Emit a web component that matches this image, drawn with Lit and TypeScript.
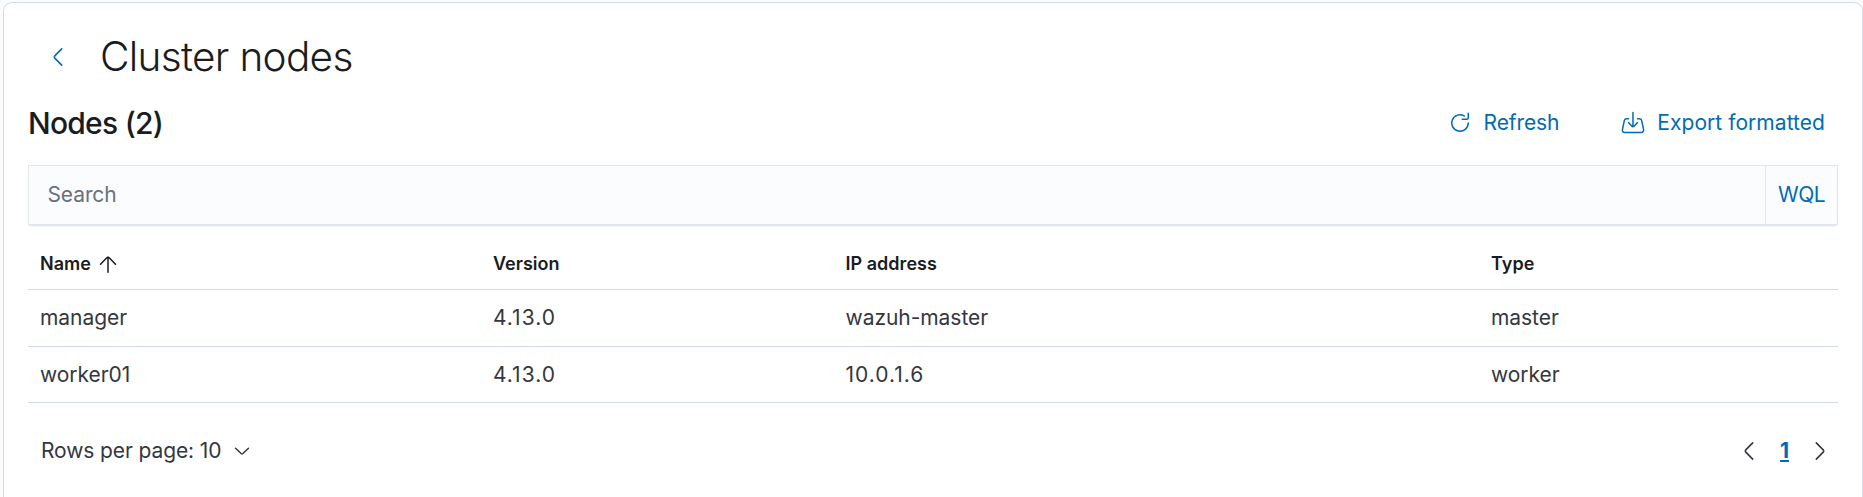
import { LitElement, html, css, svg } from "lit";
import { customElement, property } from "lit/decorators.js";
import { classMap } from "lit/directives/class-map.js";

const icons: Record<string, unknown> = {
  left: svg`<path d="M10.843 13.069L6.232 8.384a.546.546 0 010-.768l4.61-4.685a.552.552 0 000-.771.53.53 0 00-.759 0l-4.61 4.684a1.65 1.65 0 000 2.312l4.61 4.684a.53.53 0 00.76 0 .552.552 0 000-.771z"/>`,
  right: svg`<path d="M5.157 13.069l4.611-4.685a.546.546 0 000-.768L5.158 2.93a.552.552 0 010-.771.53.53 0 01.759 0l4.61 4.684a1.65 1.65 0 010 2.312l-4.61 4.684a.53.53 0 01-.76 0 .552.552 0 010-.771z"/>`,
  refresh: svg`<path d="M11.228 2.942a.5.5 0 11-.538.842A5 5 0 1013 8a.5.5 0 111 0 6 6 0 11-2.772-5.058zM14 1.5v3A1.5 1.5 0 0112.5 6h-3a.5.5 0 010-1h3a.5.5 0 00.5-.5v-3a.5.5 0 111 0z"/>`,
  tray: svg`<path fill="none" stroke="currentColor" stroke-linecap="round" d="M8 1v9.5M5 7.7l2.3 2.4a1 1 0 001.4 0L11 7.7M5 5.1H3.7a1.5 1.5 0 00-1.45 1.15L.95 12.4a1.5 1.5 0 001.45 1.9h11.2a1.5 1.5 0 001.45-1.9l-1.3-6.15A1.5 1.5 0 0012.3 5.1H11"/>`,
  up: svg`<path fill="none" stroke="currentColor" stroke-linecap="round" d="M8 13.5V3.4M3 8.2l4.2-4.4a1.1 1.1 0 011.6 0L13 8.2"/>`,
  down: svg`<path fill="none" stroke="currentColor" stroke-linecap="round" d="M3.7 6.2l3.7 3.5a.9.9 0 001.2 0l3.7-3.5"/>`,
};

@customElement("ui-icon")
class UiIcon extends LitElement {
  @property() name = "";
  static styles = css`
    :host { display: block; flex: none; width: 24px; height: 24px; }
    svg { display: block; width: 100%; height: 100%; fill: currentColor; }
  `;
  render() {
    return html`<svg viewBox="0 0 16 16">${icons[this.name]}</svg>`;
  }
}

@customElement("app-root")
class AppRoot extends LitElement {
  private rows = [
    ["manager", "4.13.0", "wazuh-master", "master"],
    ["worker01", "4.13.0", "10.0.1.6", "worker"],
  ];

  static styles = css`
    :host {
      display: block;
      box-sizing: border-box;
      height: 497px;
      padding: 2px 0 0 3px;
      overflow: hidden;
      background: #fafbfd;
      font-family: Inter, "Liberation Sans", sans-serif;
      font-size: 21px;
      line-height: 30px;
      letter-spacing: -0.005em;
      color: #343741;
    }
    h1, h2 { margin: 0; color: #1a1c21; }
    .panel {
      box-sizing: border-box;
      height: 510px;
      padding: 24px 24px 0;
      border: 1px solid #d3dae6;
      border-radius: 9px;
      background: #fff;
    }
    .title { display: flex; align-items: center; height: 60px; padding-left: 18px; gap: 30px; }
    .title ui-icon, .action, .wql { color: #006bb4; }
    h1 { font-size: 40.5px; font-weight: 300; line-height: 48px; letter-spacing: -0.68px; }
    .toolbar { display: flex; align-items: center; height: 72px; padding-right: 13px; }
    h2 { flex: 1; font-size: 30px; font-weight: 500; line-height: 36px; letter-spacing: -0.75px; }
    .action { display: flex; align-items: center; gap: 12px; margin-left: 62px; }
    .export { letter-spacing: 0.05px; }
    .search {
      display: flex;
      box-sizing: border-box;
      height: 60px;
      margin-top: 6px;
      border: 1px solid #e0e5ee;
      background: #fbfcfd;
      box-shadow: 0 1px 1px -1px rgba(152, 162, 179, 0.3), 0 3px 2px -2px rgba(152, 162, 179, 0.3);
      line-height: 58px;
    }
    .query { flex: 1; padding-left: 18.5px; color: #69707d; }
    .wql { box-sizing: border-box; width: 72px; border-left: 1px solid #e0e5ee; text-align: center; letter-spacing: -0.6px; }
    .table { padding-top: 13px; }
    .row {
      display: grid;
      grid-template-columns: 453px 352.5px 645.5px 1fr;
      align-items: center;
      box-sizing: border-box;
      height: 57px;
      padding-left: 12px;
      border-bottom: 1px solid #d3dae6;
      letter-spacing: -0.05px;
    }
    .numeric { letter-spacing: 1px; }
    .row:last-child { height: 56px; }
    .head { height: 52px; font-size: 18px; font-weight: 600; color: #1a1c21; letter-spacing: 0.03px; }
    .cell { display: flex; align-items: center; gap: 5px; }
    .footer { display: flex; align-items: center; justify-content: space-between; height: 60px; margin-top: 18px; padding: 0 6px 0 13px; }
    .size { display: flex; align-items: center; gap: 9px; }
    .pager { display: flex; align-items: center; gap: 19px; }
    .current { color: #006bb4; font-weight: 700; text-decoration: underline; }
  `;

  render() {
    const cell = (text: string) =>
      html`<div class=${classMap({ numeric: /^[\d.]+$/.test(text) })}>${text}</div>`;
    return html`
      <div class="panel">
        <div class="title"><ui-icon name="left"></ui-icon><h1>Cluster nodes</h1></div>
        <div class="toolbar">
          <h2>Nodes (2)</h2>
          <div class="action"><ui-icon name="refresh"></ui-icon><span>Refresh</span></div>
          <div class="action export"><ui-icon name="tray"></ui-icon><span>Export formatted</span></div>
        </div>
        <div class="search"><div class="query">Search</div><div class="wql">WQL</div></div>
        <div class="table">
          <div class="row head">
            <div class="cell">Name <ui-icon name="up"></ui-icon></div>
            <div>Version</div><div>IP address</div><div>Type</div>
          </div>
          ${this.rows.map((r) => html`<div class="row">${r.map(cell)}</div>`)}
        </div>
        <div class="footer">
          <div class="size"><span>Rows per page: 10</span><ui-icon name="down"></ui-icon></div>
          <div class="pager">
            <ui-icon name="left"></ui-icon><span class="current">1</span><ui-icon name="right"></ui-icon>
          </div>
        </div>
      </div>
    `;
  }
}
